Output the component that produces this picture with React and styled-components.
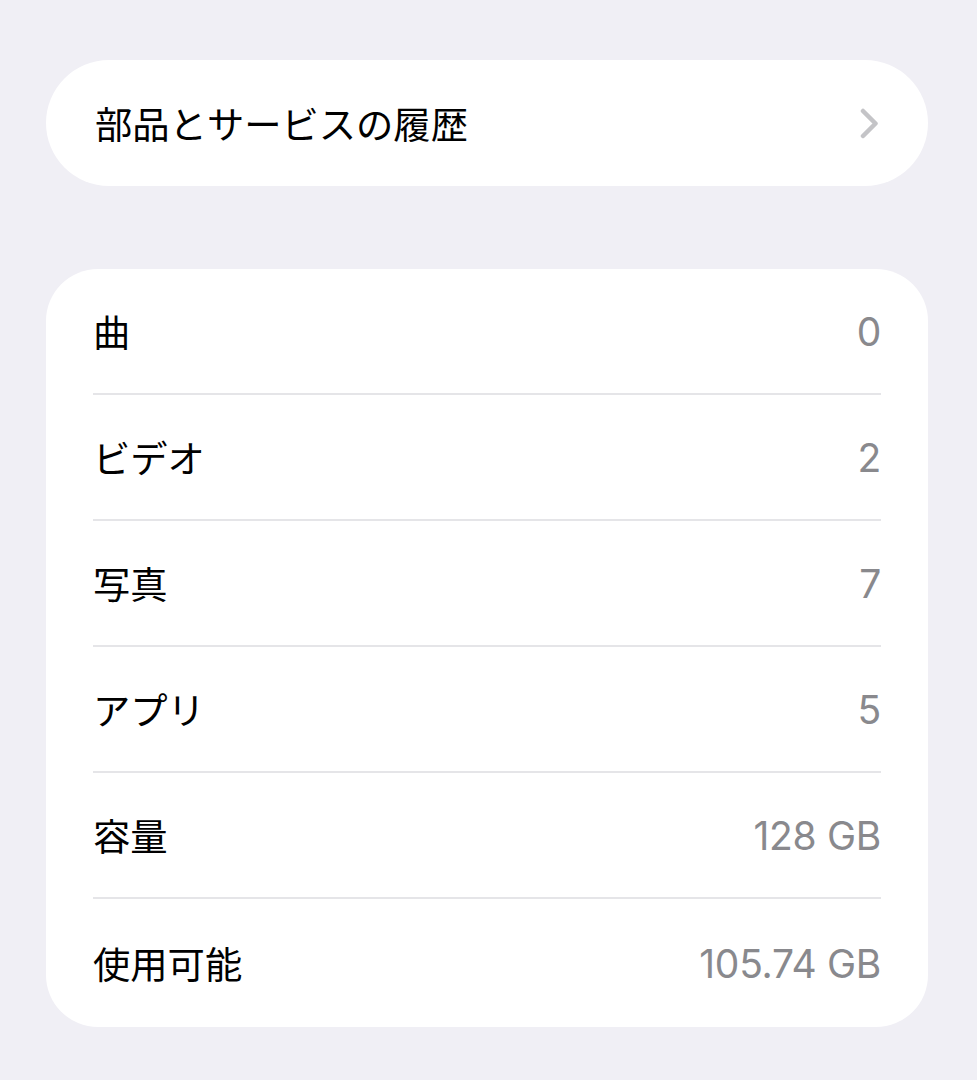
import React from 'react'
import styled, { createGlobalStyle } from 'styled-components'

const GlobalStyle = createGlobalStyle`
  html, body {
    margin: 0;
    padding: 0;
    background: #f0eff5;
  }
  body {
    font-family: Inter, "Noto Sans CJK JP", sans-serif;
    -webkit-font-smoothing: antialiased;
  }
`

const Page = styled.div`
  width: 977px;
  height: 1080px;
  box-sizing: border-box;
  padding: 60px 49px 0 46px;
  display: flex;
  flex-direction: column;
  gap: 83px;
  overflow: hidden;
`

const LinkCard = styled.div`
  height: 126px;
  background: #fff;
  border-radius: 63px;
  display: flex;
  align-items: center;
  justify-content: space-between;
  padding: 0 49px;
`

const Label = styled.span`
  font-family: "Noto Sans CJK JP", Inter, sans-serif;
  font-size: 37.3px;
  color: #000;
`

const Chevron = styled.svg`
  width: 19px;
  height: 31px;
  display: block;
`

const InfoCard = styled.div`
  background: #fff;
  border-radius: 52px;
  padding: 0 47px;
`

const Row = styled.div`
  display: flex;
  align-items: center;
  justify-content: space-between;
  border-bottom: ${p => (p.last ? 'none' : '2px solid #e5e5e8')};
  height: ${p => (p.last ? '128px' : '124px')};
`

const Value = styled.span`
  font-family: Inter, "Noto Sans CJK JP", sans-serif;
  font-size: 39px;
  color: #89898d;
  letter-spacing: -0.3px;
`

const rows = [
  ['曲', '0'],
  ['ビデオ', '2'],
  ['写真', '7'],
  ['アプリ', '5'],
  ['容量', '128 GB'],
  ['使用可能', '105.74 GB'],
]

const App = () => {
  return (
    <Page>
      <GlobalStyle />
      <LinkCard>
        <Label>部品とサービスの履歴</Label>
        <Chevron viewBox="0 0 19 31" fill="none">
          <path d="M3 3 L15.5 15.5 L3 28" stroke="#c4c4c7" strokeWidth="4.5" strokeLinecap="round" strokeLinejoin="round" />
        </Chevron>
      </LinkCard>
      <InfoCard>
        {rows.map(([k, v], i) => (
          <Row key={k} last={i === rows.length - 1}>
            <Label>{k}</Label>
            <Value>{v}</Value>
          </Row>
        ))}
      </InfoCard>
    </Page>
  )
}

export default App
